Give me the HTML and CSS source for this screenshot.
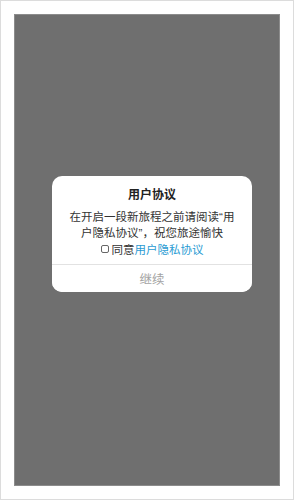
FILE: index.html
```html
<!DOCTYPE html>
<html lang="zh-CN">
<head>
  <meta charset="UTF-8">
  <title>用户协议</title>
  <link rel="stylesheet" href="styles.css">
</head>
<body>
  <div class="frame">
    <div class="screen">
      <div class="dialog">
        <div class="dialog-title">用户协议</div>
        <div class="dialog-text">在开启一段新旅程之前请阅读“用户隐私协议”，祝您旅途愉快</div>
        <label class="agree">
          <input type="checkbox" class="agree-box">
          <span>同意</span><a class="agree-link">用户隐私协议</a>
        </label>
        <button class="dialog-btn">继续</button>
      </div>
    </div>
  </div>
</body>
</html>
```

FILE: styles.css
```css
html, body {
  margin: 0;
  padding: 0;
  background: #fff;
}
body {
  font-family: 'Noto Sans CJK SC', 'Noto Sans', sans-serif;
  color: #333;
}
.frame {
  width: 294px;
  height: 500px;
  box-sizing: border-box;
  border: 1px solid #dcdcdc;
  padding: 13px;
}
.screen {
  height: 100%;
  box-sizing: border-box;
  background: #6f6f6f;
  border: 1px solid #8c8c8c;
  display: flex;
  align-items: center;
  justify-content: center;
}
.dialog {
  width: 200px;
  margin: 0 0 32px 10px;
  background: #fff;
  border-radius: 10px;
  padding-top: 9px;
  text-align: center;
  overflow: hidden;
}
.dialog-title {
  font-size: 12px;
  font-weight: bold;
  line-height: 18px;
  color: #222;
}
.dialog-text {
  margin-top: 6px;
  padding: 0 14px;
  font-family: 'Liberation Sans', 'Noto Sans CJK SC', sans-serif;
  font-size: 11.5px;
  line-height: 16px;
}
.agree {
  display: flex;
  align-items: center;
  justify-content: center;
  font-size: 11.5px;
  line-height: 16px;
}
.agree-box {
  appearance: none;
  -webkit-appearance: none;
  width: 8px;
  height: 8px;
  margin: 0 3px 0 0;
  border: 1px solid #666;
  border-radius: 2px;
  background: #fff;
}
.agree-link {
  color: #2a9bd3;
}
.dialog-btn {
  display: block;
  width: 100%;
  height: 28px;
  margin-top: 7px;
  border: none;
  border-top: 1px solid #e2e2e2;
  background: #fff;
  color: #a3a3a3;
  font-family: inherit;
  font-size: 12.5px;
  padding: 0;
}
```
